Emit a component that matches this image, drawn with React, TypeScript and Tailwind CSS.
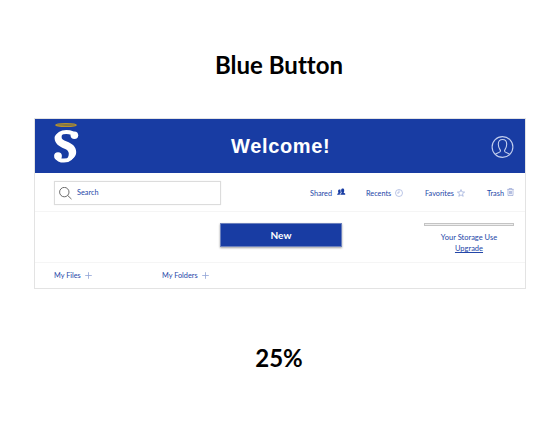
import React from "react";

function Logo() {
  return (
    <svg width="26" height="42" viewBox="0 0 26 42" fill="none">
      <ellipse cx="13" cy="3" rx="10.2" ry="1.4" stroke="#b8922c" strokeWidth="1.3" fill="#6b6b55" />
      <path
        d="M21.8 14C20.7 11.2 17.5 9.9 13.3 9.9C8 9.9 4.8 12.5 4.8 16.2C4.8 20 8.5 21.9 12.5 23.5C17.3 25.4 19.6 27.6 19.6 31C19.6 35.5 16.2 38.6 11 38.6C7.2 38.6 4.8 37.3 3.6 34.8"
        stroke="white"
        strokeWidth="4"
      />
      <path
        d="M1.6 16C1.6 21.8 6.5 24.6 11 26.5C14.6 28 15.8 29.4 15.8 31.8C15.8 34.4 14.5 36.8 12.2 38.6C19 38.6 23.2 35.3 23.2 30C23.2 24.4 18.8 21.6 13.8 19.6C10 18 8.6 17 8.6 14.9C8.6 13 9.6 11.2 11.6 10.2C5.4 9.9 1.6 12.2 1.6 16Z"
        fill="white"
      />
      <circle cx="21.4" cy="13.2" r="3.8" fill="white" />
      <circle cx="5" cy="34.1" r="3.9" fill="white" />
    </svg>
  );
}

function UserIcon() {
  return (
    <svg width="23" height="23" viewBox="0 0 23 23" fill="none" stroke="#c3cfee" strokeWidth="1.1">
      <circle cx="11.5" cy="11" r="10.4" />
      <path d="M4.2 18.3C5.6 16.9 9.5 16.7 9.5 14.9C9.5 13.7 7.3 12.1 7.3 8.2C7.3 5.2 9 3.5 11.5 3.5S15.7 5.2 15.7 8.2C15.7 12.1 13.5 13.7 13.5 14.9C13.5 16.7 17.4 16.9 18.8 18.3" />
    </svg>
  );
}

function SearchIcon() {
  return (
    <svg width="13" height="13" viewBox="0 0 13 13" fill="none" stroke="#5c5c5c" strokeWidth="0.9">
      <circle cx="5.3" cy="5.1" r="4.7" />
      <path d="M8.7 8.5L12.5 12.1" />
    </svg>
  );
}

function PeopleIcon() {
  return (
    <svg width="9" height="8" viewBox="0 0 9 8" fill="#183ca3">
      <path d="M3.4 6.8V5.8L4.8 5C4.3 4.2 4 3.2 4.1 2.2C4.2 1.2 4.7 .5 5.7 .5S7.2 1.2 7.2 2.2C7.3 3.3 7 4.2 6.6 4.8L8.2 5.6V6.8Z" />
      <path d="M.2 6.8V5.9L1.5 5.1C1.1 4.4 1 3.6 1.1 2.8C1.2 1.8 2.5 1.2 3.5 1.8C3.4 3 3.6 3.9 3.9 4.6L2.8 5.4V6.8Z" />
    </svg>
  );
}

function ClockIcon() {
  return (
    <svg width="8" height="8" viewBox="0 0 8 8" fill="none" stroke="#9eaedb" strokeWidth="0.7">
      <circle cx="4" cy="4" r="3.5" />
      <path d="M4 1.5V4H2" />
    </svg>
  );
}

function StarIcon() {
  return (
    <svg width="8" height="8" viewBox="0 0 8 8" fill="none" stroke="#8499d2" strokeWidth="0.6">
      <path d="M4 .6L4.9 2.9L7.6 3.1L5.5 4.8L6.2 7.3L4 5.9L1.8 7.3L2.5 4.8L.4 3.1L3.1 2.9Z" />
    </svg>
  );
}

function TrashIcon() {
  return (
    <svg width="7" height="8" viewBox="0 0 7 8" fill="none" stroke="#8596cc" strokeWidth="0.6">
      <path d="M.3 1.4H6.7M2.2 1.4V.5H4.8V1.4M1 1.4V7.5H6V1.4M2.5 2.8V6.2M3.5 2.8V6.2M4.5 2.8V6.2" />
    </svg>
  );
}

function PlusIcon() {
  return (
    <svg width="7" height="7" viewBox="0 0 7 7" stroke="#91a3d5" strokeWidth="0.8">
      <path d="M3.5 .2V6.8M.2 3.5H6.8" />
    </svg>
  );
}

export default function App() {
  return (
    <main className="flex h-[422px] w-[560px] flex-col items-center bg-white font-['Lato',sans-serif] text-[#2346a8] [font-variant-ligatures:none]">
      <h1 className="mt-[50px] mr-[2px] h-[30px] text-[24px] leading-[30px] font-bold whitespace-nowrap text-black">Blue Button</h1>

      <section className="mt-[38px] ml-[34px] flex h-[171px] w-[492px] flex-col self-start border border-[#e3e3e3] bg-white">
        <header className="flex h-[54px] shrink-0 bg-[#183ca3]">
          <div className="w-[196px] pt-[3px] pl-[18px]"><Logo /></div>
          <div className="w-[260px] pt-[15px] font-['Liberation_Sans',Arial,sans-serif] text-[20px] leading-[24px] font-bold tracking-[0.65px] text-white">Welcome!</div>
          <div className="pt-[17px]"><UserIcon /></div>
        </header>

        <nav className="flex h-[39px] shrink-0 border-b border-[#f5f5f5] text-[7.3px] leading-[10px]">
          <div className="mt-[8px] ml-[19px] flex h-[24px] w-[167px] items-center border border-[#dcdcdc] pl-[4px] shadow-[0_0_1px_#e5e5e5]">
            <SearchIcon />
            <span className="ml-[5px]">Search</span>
          </div>
          <div className="ml-[89px] flex w-[56px] pt-[16px]"><span className="w-[27px]">Shared</span><span className="-mt-px"><PeopleIcon /></span></div>
          <div className="flex w-[59px] pt-[16px]"><span className="w-[29px]">Recents</span><ClockIcon /></div>
          <div className="flex w-[62px] pt-[16px]"><span className="w-[32px]">Favorites</span><StarIcon /></div>
          <div className="flex pt-[16px]"><span className="w-[20px]">Trash</span><span className="-mt-px"><TrashIcon /></span></div>
        </nav>

        <div className="flex h-[51px] shrink-0 border-b border-[#f5f5f5]">
          <button className="mt-[11px] ml-[185px] flex h-[24px] w-[122px] items-center justify-center border border-[#6b80bd] bg-[#183ca3] text-[10px] font-bold tracking-[0.1px] text-white shadow-[0_1px_2px_#a0a0a0]">New</button>
          <div className="mt-[11px] ml-[82px] flex w-[90px] flex-col items-center text-[7.5px] leading-[11px]">
            <div className="h-[3px] w-full border border-[#c4c4c4] bg-[#eeeeee]" />
            <span className="mt-[6px]">Your Storage Use</span>
            <a className="underline">Upgrade</a>
          </div>
        </div>

        <div className="flex h-[25px] items-center text-[7.3px] leading-[10px]">
          <div className="ml-[19px] flex w-[108px] items-center"><span className="w-[31px]">My Files</span><PlusIcon /></div>
          <div className="flex items-center"><span className="w-[40px]">My Folders</span><PlusIcon /></div>
        </div>
      </section>

      <p className="mt-[54px] mr-[2px] h-[30px] text-[24px] leading-[30px] font-bold text-black">25%</p>
    </main>
  );
}
